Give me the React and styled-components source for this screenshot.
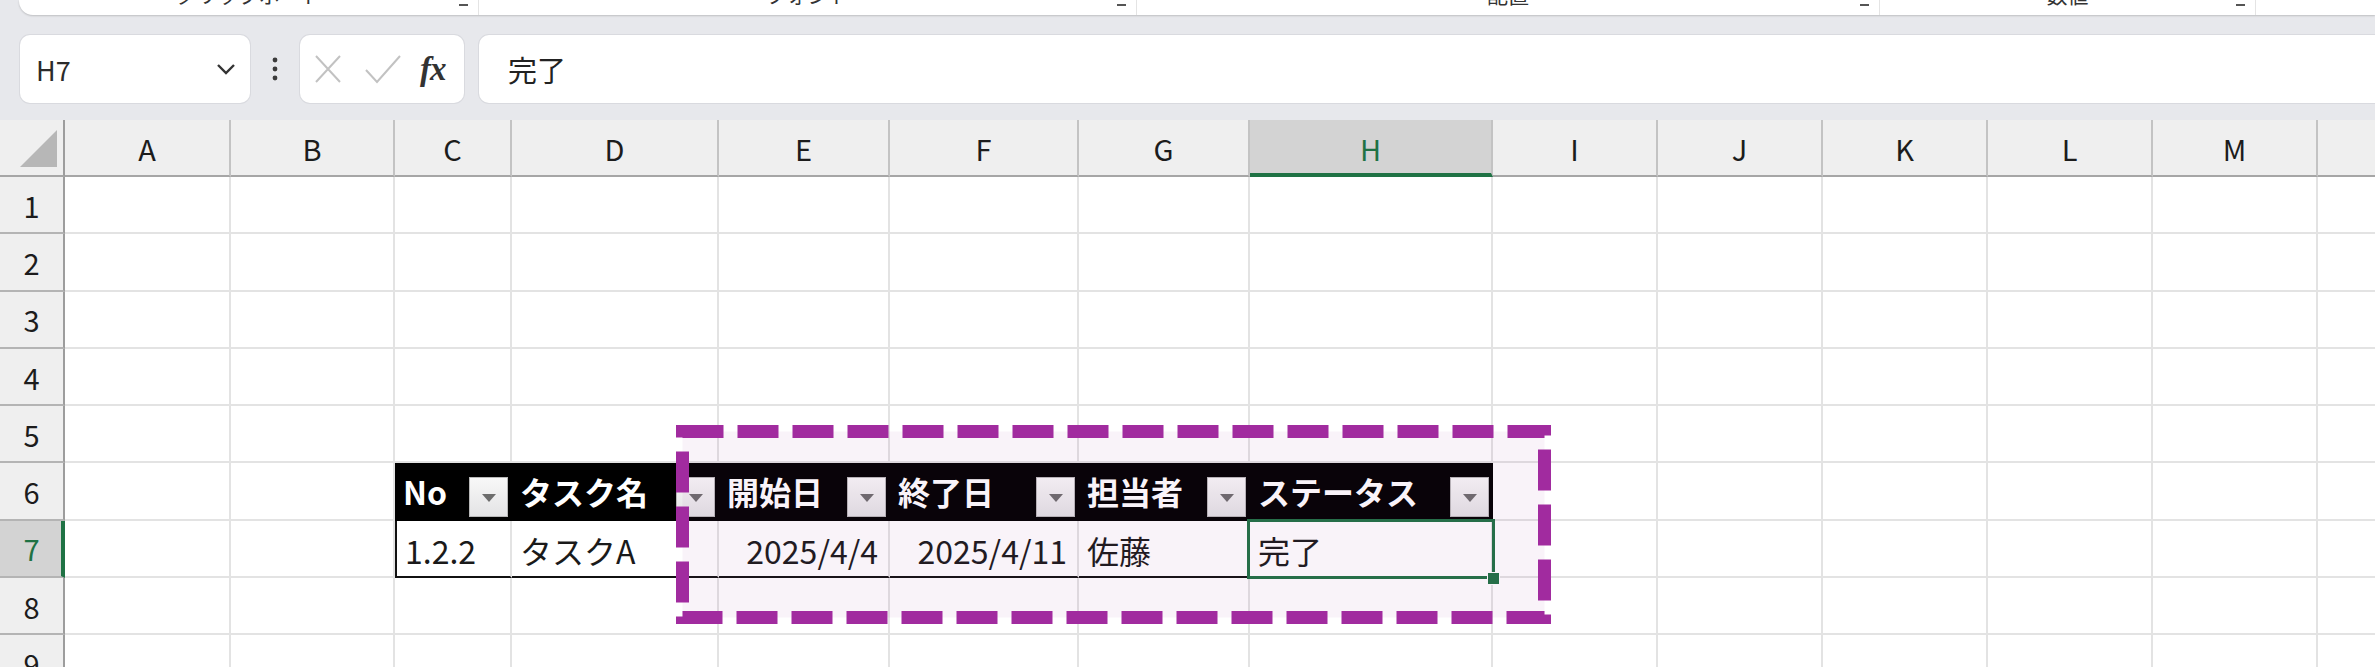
import React from 'react';
import styled, { createGlobalStyle, css } from 'styled-components';

const GlobalStyle = createGlobalStyle`
	html, body {
		margin: 0;
		padding: 0;
		background: #ffffff;
		overflow: hidden;
	}
	body {
		font-family: "Noto Sans CJK JP", "Noto Sans", sans-serif;
		color: #1a1a1a;
	}
`;

const COLUMNS = ['A', 'B', 'C', 'D', 'E', 'F', 'G', 'H', 'I', 'J', 'K', 'L', 'M', 'N'];
const TEMPLATE = '65px 166px 164px 117px 207px 171px 189px 171px 243px 165px 165px 165px 165px 165px 165px';
const GREEN = '#1f7244';

const TABLE = {
	6: { C: 'No', D: 'タスク名', E: '開始日', F: '終了日', G: '担当者', H: 'ステータス' },
	7: { C: '1.2.2', D: 'タスクA', E: '2025/4/4', F: '2025/4/11', G: '佐藤', H: '完了' },
};
const RIGHT_ALIGNED = ['E', 'F'];
const TABLE_COLS = ['C', 'D', 'E', 'F', 'G', 'H'];

const Page = styled.div`
	position: relative;
	width: 2375px;
	height: 667px;
	overflow: hidden;
`;

/* ribbon + formula bar */
const Chrome = styled.div`
	background: #e7e8ec;
	padding-bottom: 17px;
`;

const Ribbon = styled.div`
	height: 15px;
	margin-left: 19px;
	background: #ffffff;
	border-radius: 0 0 0 14px;
	box-shadow: 0 1px 2px rgba(0, 0, 0, 0.18);
	display: flex;
	overflow: hidden;
`;

const RibbonGroup = styled.div`
	position: relative;
	width: ${(p) => p.$width}px;
	display: flex;
	justify-content: center;
	border-right: 1px solid #e4e4e4;
`;

const RibbonLabel = styled.span`
	font-size: 21px;
	line-height: 21px;
	margin-top: -16px;
	color: #333;
	white-space: nowrap;
`;

const Launcher = styled.span`
	position: absolute;
	right: 10px;
	bottom: 9px;
	width: 9px;
	height: 2px;
	background: #555;
`;

const FormulaBar = styled.div`
	display: flex;
	align-items: center;
	padding: 20px 0 0 20px;
	height: 68px;
	box-sizing: content-box;
`;

const Box = styled.div`
	height: 68px;
	box-sizing: border-box;
	background: #ffffff;
	border-radius: 10px;
	box-shadow: 0 0 0 1px #d9dadf;
	display: flex;
	align-items: center;
`;

const NameBox = styled(Box)`
	width: 230px;
	padding: 0 14px 0 16px;
	justify-content: space-between;
	font-size: 27px;
	color: #2b2b2b;
`;

const Dots = styled.div`
	width: 50px;
	display: flex;
	justify-content: center;
`;

const FuncBox = styled(Box)`
	width: 164px;
	padding: 0 10px 0 14px;
	gap: 22px;
`;

const Fx = styled.span`
	font-family: "Liberation Serif", serif;
	font-style: italic;
	font-weight: bold;
	font-size: 33px;
	color: #333;
	margin-left: -4px;
	letter-spacing: -1px;
`;

const FormulaInput = styled(Box)`
	flex: 1;
	margin-left: 15px;
	margin-right: -14px;
	padding-left: 29px;
	font-size: 29px;
	color: #222;
`;

/* sheet */
const Grid = styled.div`
	display: grid;
	grid-template-columns: ${TEMPLATE};
	height: ${(p) => p.$height}px;
`;

const Corner = styled.div`
	position: relative;
	background: #efefef;
	border-right: 2px solid #9d9d9d;
	border-bottom: 2px solid #a6a6a6;
	box-sizing: border-box;

	&::after {
		content: '';
		position: absolute;
		right: 6px;
		bottom: 8px;
		border-left: 37px solid transparent;
		border-bottom: 37px solid #b7b7b7;
	}
`;

const ColHeader = styled.div`
	display: flex;
	align-items: center;
	justify-content: center;
	box-sizing: border-box;
	background: ${(p) => (p.$selected ? '#d3d3d3' : '#efefef')};
	border-right: 2px solid #c3c3c3;
	border-bottom: ${(p) => (p.$selected ? `4px solid ${GREEN}` : '2px solid #a6a6a6')};
	color: ${(p) => (p.$selected ? GREEN : '#1c1c1c')};
	font-size: 29px;
	padding-top: ${(p) => (p.$selected ? '2px' : '0')};
`;

const RowHeader = styled.div`
	display: flex;
	align-items: center;
	justify-content: center;
	box-sizing: border-box;
	background: ${(p) => (p.$selected ? '#d3d3d3' : '#efefef')};
	border-right: ${(p) => (p.$selected ? `4px solid ${GREEN}` : '2px solid #9d9d9d')};
	border-bottom: 2px solid #b4b4b4;
	color: ${(p) => (p.$selected ? GREEN : '#1c1c1c')};
	font-size: 29px;
	padding-left: ${(p) => (p.$selected ? '2px' : '0')};
`;

const Cell = styled.div`
	position: relative;
	display: flex;
	align-items: center;
	box-sizing: border-box;
	border-right: 2px solid #e3e3e3;
	border-bottom: 2px solid #e3e3e3;
	font-size: 32px;
	white-space: nowrap;
	min-width: 0;

	${(p) =>
		p.$kind === 'head' &&
		css`
			background: #000;
			border-color: #000;
			color: #ffffff;
			font-weight: bold;
			padding-left: 8px;
			padding-right: 2px;
		`}

	${(p) =>
		p.$kind === 'data' &&
		css`
			border-bottom-color: #111;
			padding: 4px 10px 0 8px;
			justify-content: ${p.$right ? 'flex-end' : 'flex-start'};
		`}

	${(p) =>
		p.$first &&
		css`
			border-left: 2px solid #111;
		`}

	${(p) =>
		p.$selected &&
		css`
			z-index: 2;
			&::after {
				content: '';
				position: absolute;
				left: -3px;
				top: -2px;
				right: -4px;
				bottom: -3px;
				border: 3px solid ${GREEN};
				pointer-events: none;
			}
		`}
`;

const HeadText = styled.span`
	flex: 1;
`;

const FilterButton = styled.span`
	align-self: flex-end;
	margin-bottom: 2px;
	width: 39px;
	height: 40px;
	box-sizing: border-box;
	background: linear-gradient(#f8f8f8, #e3e3e5);
	border: 1px solid #b8b8b8;
	display: flex;
	align-items: center;
	justify-content: center;

	&::before {
		content: '';
		border-left: 7px solid transparent;
		border-right: 7px solid transparent;
		border-top: 8px solid #6d6d6d;
		margin-top: 2px;
	}
`;

const FillHandle = styled.span`
	position: absolute;
	right: -9px;
	bottom: -9px;
	width: 11px;
	height: 11px;
	background: ${GREEN};
	border: 1px solid #ffffff;
	z-index: 3;
`;

const Highlight = styled.svg`
	position: absolute;
	left: 676px;
	top: 425px;
	pointer-events: none;
	z-index: 5;
`;

function Chevron() {
	return (
		<svg width="20" height="12" viewBox="0 0 20 12">
			<polyline points="2,2 10,10 18,2" fill="none" stroke="#333" strokeWidth="2.4" />
		</svg>
	);
}

function VerticalDots() {
	return (
		<svg width="6" height="24" viewBox="0 0 6 24">
			<circle cx="3" cy="3" r="2.4" fill="#3b3b3b" />
			<circle cx="3" cy="12" r="2.4" fill="#3b3b3b" />
			<circle cx="3" cy="21" r="2.4" fill="#3b3b3b" />
		</svg>
	);
}

function CancelIcon() {
	return (
		<svg width="28" height="30" viewBox="0 0 28 30">
			<path d="M2 2 L26 28 M26 2 L2 28" stroke="#c2c2c2" strokeWidth="2" fill="none" />
		</svg>
	);
}

function EnterIcon() {
	return (
		<svg width="38" height="30" viewBox="0 0 38 30">
			<path d="M2 16 L13 28 L36 2" stroke="#c2c2c2" strokeWidth="2" fill="none" />
		</svg>
	);
}

const RIBBON_GROUPS = [
	{ label: 'クリップボード', width: 459 },
	{ label: 'フォント', width: 657 },
	{ label: '配置', width: 742 },
	{ label: '数値', width: 375 },
];

function SheetRow({ row }) {
	const data = TABLE[row] || {};
	return (
		<Grid $height={57.3}>
			<RowHeader $selected={row === 7}>{row}</RowHeader>
			{COLUMNS.map((col) => {
				const inTable = TABLE_COLS.includes(col) && (row === 6 || row === 7);
				if (!inTable) return <Cell key={col} />;
				if (row === 6) {
					return (
						<Cell key={col} $kind="head">
							<HeadText>{data[col]}</HeadText>
							<FilterButton />
						</Cell>
					);
				}
				const selected = col === 'H';
				return (
					<Cell
						key={col}
						$kind="data"
						$right={RIGHT_ALIGNED.includes(col)}
						$first={col === 'C'}
						$selected={selected}
					>
						{data[col]}
						{selected && <FillHandle />}
					</Cell>
				);
			})}
		</Grid>
	);
}

export default function App() {
	return (
		<Page>
			<GlobalStyle />
			<Chrome>
				<Ribbon>
					{RIBBON_GROUPS.map((g) => (
						<RibbonGroup key={g.label} $width={g.width}>
							<RibbonLabel>{g.label}</RibbonLabel>
							<Launcher />
						</RibbonGroup>
					))}
				</Ribbon>
				<FormulaBar>
					<NameBox>
						<span>H7</span>
						<Chevron />
					</NameBox>
					<Dots>
						<VerticalDots />
					</Dots>
					<FuncBox>
						<CancelIcon />
						<EnterIcon />
						<Fx>fx</Fx>
					</FuncBox>
					<FormulaInput>完了</FormulaInput>
				</FormulaBar>
			</Chrome>

			<Grid $height={57}>
				<Corner />
				{COLUMNS.map((col) => (
					<ColHeader key={col} $selected={col === 'H'}>
						{col}
					</ColHeader>
				))}
			</Grid>
			{[1, 2, 3, 4, 5, 6, 7, 8, 9].map((r) => (
				<SheetRow key={r} row={r} />
			))}

			<Highlight width="876" height="199" viewBox="0 0 876 199">
				<rect
					x="6.5"
					y="6.5"
					width="862"
					height="186"
					fill="rgba(161, 43, 159, 0.06)"
					stroke="#a12b9f"
					strokeWidth="13"
					strokeDasharray="41 14"
				/>
			</Highlight>
		</Page>
	);
}
